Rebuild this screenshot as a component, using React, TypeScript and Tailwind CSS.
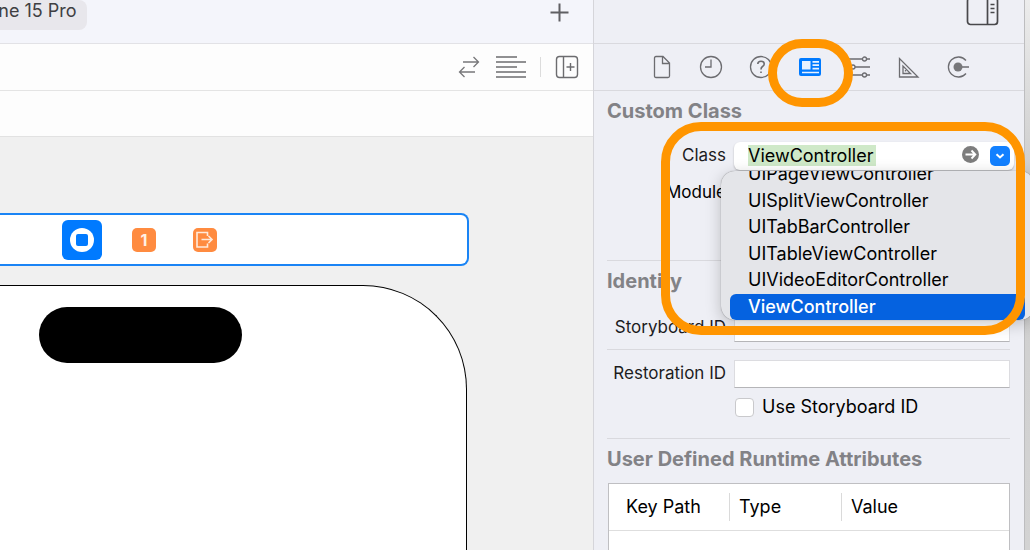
import type { ReactNode } from 'react'

const controllers = [
  'UIPageViewController',
  'UISplitViewController',
  'UITabBarController',
  'UITableViewController',
  'UIVideoEditorController',
  'ViewController',
]

export default function App() {
  return (
    <div className="flex h-screen overflow-hidden bg-[#f0f0f0] font-[Inter,sans-serif] text-black">
      <Editor />
      <Inspector />
      {/* Desktop showing past the window edge */}
      <div className="w-[6px] shrink-0 border-l border-[#bdbdbf] bg-linear-to-b from-[#ececec] via-[#cfcfcf] via-30% to-[#d3d3d3]" />
    </div>
  )
}

function Editor() {
  return (
    <main className="flex min-w-0 flex-1 flex-col">
      {/* Window toolbar */}
      <div className="flex h-11 shrink-0 items-start justify-between border-b border-[#e2e2e6] bg-[#f4f5fb] pr-6">
        <button className="-ml-[39px] h-[30px] rounded-lg bg-[#e8e7ec] pr-[10px] pb-2 text-lg leading-[22px] text-[#3f3f42]">
          iPhone 15 Pro
        </button>
        <button aria-label="Add" className="pt-[3px]">
          <svg className="size-[19px]" viewBox="0 0 19 19" stroke="#5f5f63" strokeWidth="2" fill="none">
            <path d="M9.500 0.500V18.500M0.500 9.500H18.500" />
          </svg>
        </button>
      </div>

      {/* Editor toolbar */}
      <div className="flex h-[47px] shrink-0 items-center justify-end border-b border-[#e4e4e4] bg-[#fdfdfd] pr-[14px]">
        <button aria-label="Related items" className="mr-4">
          <svg width="22" height="22" viewBox="0 0 22 22" fill="none" stroke="#77777a" strokeWidth="1.300">
            <path d="M5 6H20M15.500 1L20.500 6L15.500 11M17 16H2M6.500 11L1.500 16L6.500 21" />
          </svg>
        </button>
        <button aria-label="Adjust editor options">
          <svg width="30" height="22" viewBox="0 0 30 22" fill="none" stroke="#6c6c6f" strokeWidth="1.500">
            <path d="M0 1H21M0 6H30M0 11H21M0 16H30M0 21H30" />
          </svg>
        </button>
        <div className="mx-[14px] h-5 w-px bg-[#dcdcdc]" />
        <button aria-label="Add editor">
          <svg width="24" height="24" viewBox="0 0 24 24" fill="none" stroke="#6c6c6f" strokeWidth="1.400">
            <rect x="1.500" y="1.500" width="21" height="21" rx="3" />
            <path d="M8.500 1.500V22.500M11.500 12H19.500M15.500 8V16" />
          </svg>
        </button>
      </div>
      <div className="h-[46px] shrink-0 border-b border-[#e2e2e2] bg-[#fdfdfd]" />

      {/* Canvas */}
      <div className="min-h-0 flex-1 overflow-hidden pt-[76px]">
        <div className="flex h-[53px] w-[469px] items-center rounded-r-lg border-2 border-l-0 border-[#1a84f5] bg-white pl-[62px]">
          <button aria-label="View Controller" className="flex size-10 items-center justify-center rounded-md bg-[#007aff]">
            <span className="flex size-6 items-center justify-center rounded-full bg-white">
              <span className="size-3 rounded-xs bg-[#007aff]" />
            </span>
          </button>
          <button className="ml-[30px] size-6 rounded-[5px] bg-[#ff8b40] text-base font-bold leading-6 text-[#fff1e6]">
            1
          </button>
          <button aria-label="Exit" className="ml-[37px] size-6 rounded-[5px] bg-[#ff8b40]">
            <svg width="24" height="24" viewBox="0 0 24 24" fill="none" stroke="#ffeadb" strokeWidth="1.600">
              <path d="M14.500 8V4.500H4V19H14.500V15.500M8.500 11.500H18.500M15.500 8L19 11.500L15.500 15" />
            </svg>
          </button>
        </div>
        <div className="mt-[19px] h-[600px] w-[467px] rounded-tr-[104px] border-t border-r border-black bg-white pt-[21px] pl-[39px]">
          <div className="h-14 w-[203px] rounded-full bg-black" />
        </div>
      </div>
    </main>
  )
}

function Inspector() {
  return (
    <aside className="relative z-10 w-[431px] shrink-0 border-l border-[#d5d5da] bg-[#eeeff5]">
      <div className="flex h-11 items-start justify-end border-b border-[#d9d9de] pr-6">
        <button aria-label="Hide inspectors">
          <svg width="34" height="27" viewBox="0 0 34 27" fill="none" stroke="#48484b" strokeWidth="1.700">
            <rect x="1.500" y="-2" width="30" height="26.500" rx="3" />
            <path d="M21.500 0V24.500" />
            <path d="M24.500 4.500H28.500M24.500 8.500H28.500M24.500 12.500H28.500" strokeWidth="1.300" />
          </svg>
        </button>
      </div>

      <InspectorTabs />

      {/* Custom Class */}
      <section className="mr-[14px] ml-[13px] h-[170px] border-b border-[#d9d9de]">
        <SectionTitle>Custom Class</SectionTitle>
        <div className="mt-[19px] flex items-center gap-2">
          <FieldLabel id="class">Class</FieldLabel>
          <ClassField />
        </div>
        <div className="mt-[9px] flex h-7 items-center gap-2">
          <span className="w-[119px] text-right text-[17px]">Module</span>
        </div>
      </section>

      {/* Identity */}
      <section className="mr-[14px] ml-[13px] border-b border-[#d9d9de]">
        <SectionTitle>Identity</SectionTitle>
        <div className="mt-[21px] flex items-center gap-2 border-b border-[#d9d9de] pb-[7px]">
          <FieldLabel id="storyboard">Storyboard ID</FieldLabel>
          <TextField id="storyboard" />
        </div>
        <div className="mt-[10px] flex items-center gap-2">
          <FieldLabel id="restoration">Restoration ID</FieldLabel>
          <TextField id="restoration" />
        </div>
        <label className="mt-[7px] mb-[19px] ml-[128px] flex h-6 items-center gap-2 text-lg">
          <input
            type="checkbox"
            className="size-[19px] appearance-none rounded-[4px] border border-[#c9c9cc] bg-white"
          />
          Use Storyboard ID
        </label>
      </section>

      {/* Runtime attributes */}
      <section className="mr-[14px] ml-[13px]">
        <SectionTitle>User Defined Runtime Attributes</SectionTitle>
        <div className="mt-3 ml-px h-[200px] border border-[#bfbfc2] bg-white">
          <table className="w-full table-fixed text-left text-lg">
            <thead>
              <tr className="h-[46px] border-b border-[#dedede]">
                <th className="w-[120px] pl-[17px] font-normal">Key Path</th>
                <th className="w-[112px] font-normal">
                  <div className="border-l border-[#dadada] pl-[9px]">Type</div>
                </th>
                <th className="font-normal">
                  <div className="border-l border-[#dadada] pl-[9px]">Value</div>
                </th>
              </tr>
            </thead>
          </table>
        </div>
      </section>

      {/* Callout around the class picker */}
      <div className="pointer-events-none absolute top-[122px] left-[67px] z-20 h-[213px] w-[364px] rounded-[40px] border-[9px] border-[#ff9500]" />
    </aside>
  )
}

function InspectorTabs() {
  return (
    <div className="h-[47px] border-b border-[#d9d9de]">
      <nav className="ml-[43px] grid h-full w-[346px] grid-cols-7">
        <Tab label="File">
          <path d="M4.500 3Q4.500 1.500 6 1.500H13L19.500 8V21Q19.500 22.500 18 22.500H6Q4.500 22.500 4.500 21ZM12.500 1.500V8.500H19.500" />
        </Tab>
        <Tab label="History">
          <circle cx="12" cy="12" r="10.500" />
          <path d="M12 4.500V12H6" />
        </Tab>
        <Tab label="Quick Help">
          <circle cx="12" cy="12" r="10.500" />
          <path d="M8.800 9Q8.800 6.200 12 6.200Q15.200 6.200 15.200 9Q15.200 10.500 13.500 11.500Q12 12.500 12 14.500M12 16.500V18" strokeWidth="1.600" />
        </Tab>
        <Tab label="Identity" callout>
          <rect x="1" y="3" width="22" height="18" rx="2" fill="#007aff" stroke="none" />
          <path d="M4 6H12.500V14.500H4Z" fill="#e9f2ff" stroke="none" />
          <path d="M14.500 6.800H21M14.500 10.200H21M14.500 13.700H21M4 17.500H21" stroke="#e9f2ff" strokeWidth="1.700" />
        </Tab>
        <Tab label="Attributes">
          <path d="M1 4H15.500M19.500 4H23M1 12H4M8 12H23M1 20H15.500M19.500 20H23" />
          <circle cx="17.500" cy="4" r="2" />
          <circle cx="6" cy="12" r="2" />
          <circle cx="17.500" cy="20" r="2" />
        </Tab>
        <Tab label="Size">
          <path d="M2.500 3.500V22H21ZM6 11V18.500H13.500ZM8.500 15V16.500" />
        </Tab>
        <Tab label="Connections">
          <path d="M20 5.500A10 10 0 1 0 20 18.500M12 12H23" />
          <circle cx="12" cy="12" r="4.500" fill="#77777a" stroke="none" />
        </Tab>
      </nav>
    </div>
  )
}

function Tab({ label, callout, children }: { label: string; callout?: boolean; children: ReactNode }) {
  return (
    <button aria-label={label} className="relative flex items-center justify-center">
      <svg width="24" height="24" viewBox="0 0 24 24" fill="none" stroke="#6c6c70" strokeWidth="1.300">
        {children}
      </svg>
      {callout && (
        <span className="pointer-events-none absolute -top-[5px] -left-[17px] z-10 h-[68px] w-[85px] rounded-full border-[9px] border-[#ff9500]" />
      )}
    </button>
  )
}

function ClassField() {
  return (
    <div className="relative -mr-1 flex h-7 min-w-0 flex-1 items-center rounded-md bg-white pr-1 pl-[14px] shadow-[0_1px_2px_#00000040]">
      <span className="absolute top-[3px] left-[14px] h-[21px] w-[128px] bg-[#cfe9c8]" />
      <input
        id="class"
        defaultValue="ViewController"
        className="relative w-full min-w-0 flex-1 text-lg leading-7 outline-none"
      />
      <button aria-label="Jump to class" className="mr-[11px] pb-1">
        <svg width="17" height="17" viewBox="0 0 17 17" fill="none" stroke="white" strokeWidth="1.900">
          <circle cx="8.500" cy="8.500" r="8.500" fill="#7d7d7d" stroke="none" />
          <path d="M3.500 8.500H13M9.500 4.500L13.300 8.500L9.500 12.500" />
        </svg>
      </button>
      <button aria-label="Show classes" className="flex size-5 items-center justify-center rounded-[5px] bg-[#1280ff]">
        <svg width="10" height="6" viewBox="0 0 10 6" fill="none" stroke="white" strokeWidth="2">
          <path d="M1.500 1.200L5 4.500L8.500 1.200" />
        </svg>
      </button>

      {/* Completion list, scrolled to its last entry */}
      <div className="absolute top-[29px] -left-[13px] z-10 h-[149px] w-[313px] rounded-[14px] bg-[#e4e5e9] shadow-[0_4px_16px_#00000038,0_0_1px_#00000080]">
        <div className="flex h-full flex-col justify-end overflow-hidden rounded-[14px] px-[9px]">
          <ul className="grid h-[159px] shrink-0 grid-rows-6 text-lg">
            {controllers.map((name) => (
              <li
                key={name}
                className={
                  name === 'ViewController'
                    ? 'flex items-center rounded-md bg-[#0562e0] pl-[18px] font-medium text-white'
                    : 'flex items-center pl-[18px]'
                }
              >
                {name}
              </li>
            ))}
          </ul>
        </div>
      </div>
    </div>
  )
}

function SectionTitle({ children }: { children: ReactNode }) {
  return <h2 className="pt-2 text-xl leading-6 font-bold text-[#828286]">{children}</h2>
}

function FieldLabel({ id, children }: { id: string; children: ReactNode }) {
  return (
    <label htmlFor={id} className="w-[119px] shrink-0 text-right text-[17px] whitespace-nowrap text-[#1c1c1e]">
      {children}
    </label>
  )
}

function TextField({ id }: { id: string }) {
  return (
    <input
      id={id}
      className="h-7 min-w-0 flex-1 border border-[#dcdce0] border-b-[#b5b5b8] bg-white px-2 text-lg outline-none"
    />
  )
}
